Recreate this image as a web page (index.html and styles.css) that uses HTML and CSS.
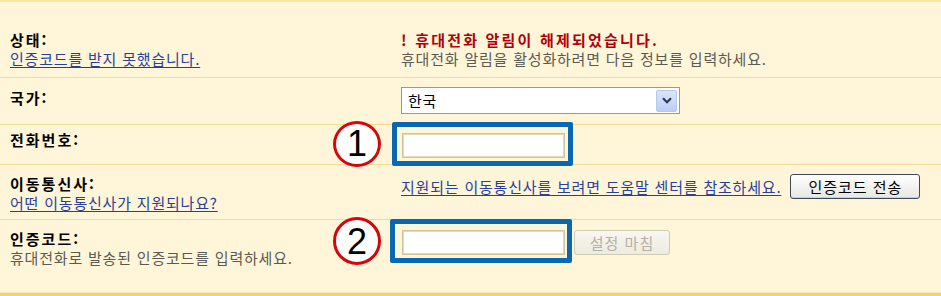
FILE: index.html
```html
<!DOCTYPE html>
<html lang="ko">
<head>
<meta charset="utf-8">
<title>휴대전화 알림</title>
<link rel="stylesheet" href="styles.css">
</head>
<body>
<div class="panel">
  <div class="row row-status">
    <div class="label-col">
      <div class="label">상태:</div>
      <a class="link" href="#">인증코드를 받지 못했습니다.</a>
    </div>
    <div class="field-col stack">
      <div class="alert">! 휴대전화 알림이 해제되었습니다.</div>
      <div class="hint">휴대전화 알림을 활성화하려면 다음 정보를 입력하세요.</div>
    </div>
  </div>

  <div class="row row-country">
    <div class="label-col">
      <div class="label">국가:</div>
    </div>
    <div class="field-col">
      <div class="select">
        <span class="select-text">한국</span>
        <span class="select-btn">
          <svg width="10" height="7" viewBox="0 0 10 7"><path d="M1 1.2 L5 5.2 L9 1.2" fill="none" stroke="#2d3a55" stroke-width="2.2"/></svg>
        </span>
      </div>
    </div>
  </div>

  <div class="row row-phone">
    <div class="label-col">
      <div class="label">전화번호:</div>
    </div>
    <div class="field-col">
      <span class="mark mark-1">
        <span class="badge">1</span>
        <input class="text-input" type="text">
      </span>
    </div>
  </div>

  <div class="row row-carrier">
    <div class="label-col">
      <div class="label">이동통신사:</div>
      <a class="link" href="#">어떤 이동통신사가 지원되나요?</a>
    </div>
    <div class="field-col inline">
      <a class="link" href="#">지원되는 이동통신사를 보려면 도움말 센터를 참조하세요.</a>
      <button class="btn" type="button">인증코드 전송</button>
    </div>
  </div>

  <div class="row row-code">
    <div class="label-col">
      <div class="label">인증코드:</div>
      <div class="hint">휴대전화로 발송된 인증코드를 입력하세요.</div>
    </div>
    <div class="field-col inline">
      <span class="mark mark-2">
        <span class="badge">2</span>
        <input class="text-input" type="text">
      </span>
      <button class="btn btn-disabled" type="button" disabled>설정 마침</button>
    </div>
  </div>
</div>
</body>
</html>
```

FILE: styles.css
```css
html, body {
  margin: 0;
  padding: 0;
  background: #fff6d9;
}

body {
  font-family: "Noto Sans CJK KR", "Noto Sans", sans-serif;
  font-size: 15px;
  line-height: 19px;
  letter-spacing: 0.8px;
  color: #000;
  width: 941px;
  height: 296px;
  overflow: hidden;
}

.panel {
  background: #fff6d9;
  border-top: 2px solid #fbe9a2;
  border-bottom: 4px solid #f0d46f;
  box-shadow: 0 -1px 0 #fbe8aa inset;
}

.row {
  display: grid;
  grid-template-columns: 401px 1fr;
  border-top: 1px solid #f3dc95;
  box-sizing: border-box;
}

.row:first-child {
  border-top: none;
}

.label-col {
  padding-left: 10px;
  display: flex;
  flex-direction: column;
  align-items: flex-start;
}

.label {
  font-weight: bold;
  letter-spacing: 2px;
}

.link {
  color: #2a3f9c;
  text-decoration: underline;
  text-underline-offset: 2px;
}

.hint {
  color: #5b5a52;
}

.alert {
  color: #b0000c;
  font-weight: bold;
  letter-spacing: 2.2px;
}

.field-col.stack {
  display: flex;
  flex-direction: column;
}

.field-col.inline {
  display: flex;
  align-items: center;
}

/* row metrics */
.row-status {
  height: 75px;
  padding-top: 28px;
}

.row-country {
  height: 47px;
  padding-top: 9px;
}
.row-country .label-col {
  padding-top: 1px;
}

.row-phone {
  height: 40px;
  padding-top: 5px;
}
.row-phone .field-col {
  padding-top: 3px;
}

.row-carrier {
  height: 55px;
  padding-top: 9px;
}
.row-carrier .field-col {
  align-self: start;
  gap: 9px;
}

.row-code {
  height: 74px;
  padding-top: 9px;
}
.row-code .field-col {
  align-self: start;
  padding-top: 1px;
  gap: 9px;
}

/* select */
.select {
  width: 279px;
  height: 27px;
  box-sizing: border-box;
  border: 1px solid #8b9cb0;
  background: #fff;
  display: flex;
  align-items: center;
  justify-content: space-between;
  padding: 0 2px 0 6px;
}

.select-btn {
  width: 21px;
  height: 22px;
  box-sizing: border-box;
  border: 1px solid #b8c8ec;
  border-radius: 2px;
  background: linear-gradient(#dbe5fb, #bccdf4);
  display: flex;
  align-items: center;
  justify-content: center;
}

/* inputs */
.text-input {
  display: block;
  width: 163px;
  height: 25px;
  box-sizing: border-box;
  margin: 0;
  border: 2px solid #e2dbb5;
  outline: 1px solid #cfc59c;
  outline-offset: -1px;
  background: #fff;
  padding: 0 4px;
  font: inherit;
}

.mark {
  position: relative;
  display: inline-block;
  margin-left: 1px;
}

.mark::after {
  content: "";
  position: absolute;
  left: -10px;
  right: -8px;
  top: -11px;
  bottom: -8px;
  border: 5px solid #0a67b1;
  border-radius: 2px;
  pointer-events: none;
}

.mark-2::after {
  left: -12px;
  right: -7px;
  bottom: -8px;
}

.badge {
  position: absolute;
  left: -69px;
  top: -12px;
  width: 48px;
  height: 46px;
  box-sizing: border-box;
  border: 3px solid #d3080c;
  border-radius: 50%;
  background: #fff;
  color: #000;
  font-family: "Liberation Sans", Arial, sans-serif;
  font-size: 36px;
  line-height: 40px;
  letter-spacing: 0;
  text-align: center;
}

.mark-2 .badge {
  top: -13px;
  height: 48px;
  line-height: 44px;
}

/* buttons */
.btn {
  font: inherit;
  font-size: 15px;
  line-height: 19px;
  letter-spacing: 1px;
  white-space: nowrap;
  color: #000;
  height: 25px;
  padding: 0;
  border: 1px solid #3c4a58;
  border-radius: 3px;
  background: linear-gradient(#ffffff, #e6e6e2);
  box-shadow: inset 0 -1px 0 #d0d0cc;
  margin: 0;
}

.btn-disabled {
  color: #b3b0a4;
  border-color: #cdcab8;
  background: linear-gradient(#f8f6ee, #eeebdf);
  box-shadow: none;
  width: 96px;
}

.row-carrier .btn {
  width: 130px;
}
```
